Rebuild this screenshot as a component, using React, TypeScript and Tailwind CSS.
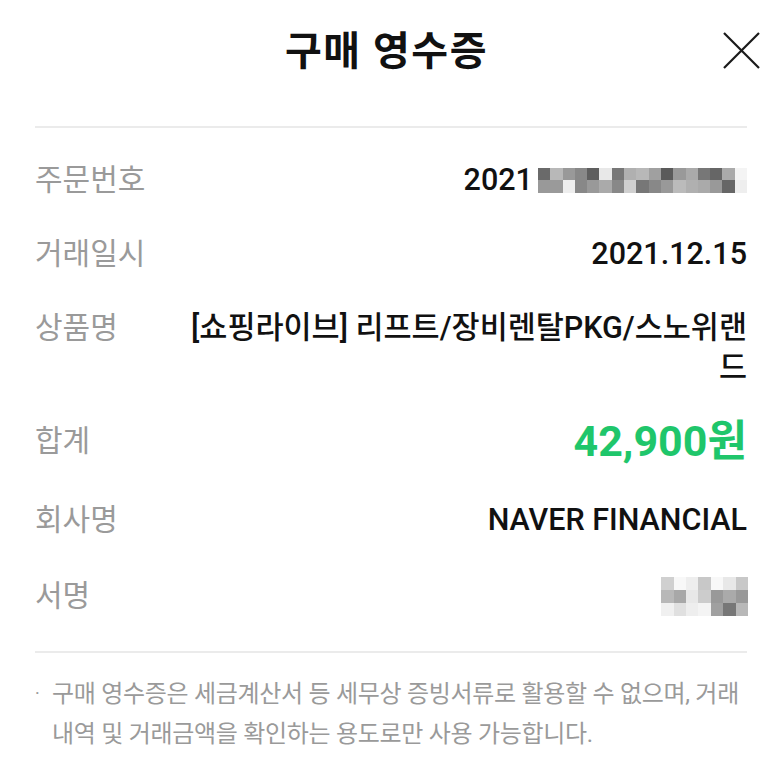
import React from "react";

const font = { fontFamily: "Roboto, 'Noto Sans CJK KR', sans-serif" };

const orderRow1 = ["#6a6a6a","#b8b8b8","#999999","#888888","#5e5e5e","#e8e8e8","#777777","#b0b0b0","#b8b8b8","#a0a0a0","#5a5a5a","#999999","#aaaaaa","#777777","#666666","#aaaaaa","#f4f4f4"];
const orderRow2 = ["#999999","#9a9a9a","#eeeeee","#888888","#999999","#aaaaaa","#888888","#d0d0d0","#777777","#888888","#999999","#bbbbbb","#b0b0b0","#aaaaaa","#999999","#666666","#eeeeee"];
const sig = [
  ["#d0d0d0","#f8f8f8","#eeeeee","#c8c8c8","#f8f8f8","#e8e8e8","#c8c8c8"],
  ["#b8b8b8","#a8a8a8","#e8e8e8","#cccccc","#999999","#aaaaaa","#999999"],
  ["#f0f0f0","#e0e0e0","#eeeeee","#f4f4f4","#a0a0a0","#777777","#b8b8b8"],
];

function Mosaic({ rows, w, h }: { rows: string[][]; w: number; h: number }) {
  return (
    <div className="flex flex-col">
      {rows.map((r, i) => (
        <div key={i} className="flex">
          {r.map((c, j) => (
            <div key={j} style={{ width: w, height: h, backgroundColor: c }} />
          ))}
        </div>
      ))}
    </div>
  );
}

function Row({ label, children, className = "" }: { label: string; children: React.ReactNode; className?: string }) {
  return (
    <div className={`flex justify-between items-start ${className}`}>
      <div className="text-[30px] leading-[40px] text-[#9a9a9a] whitespace-nowrap">{label}</div>
      <div className="text-right text-[30.5px] leading-[40px] font-medium text-[#111]">{children}</div>
    </div>
  );
}

export default function App() {
  return (
    <div className="w-[773px] h-[768px] bg-white overflow-hidden" style={font}>
      <div className="relative h-[126px] flex items-start justify-center">
        <h1 className="mt-[28px] text-[40px] leading-[48px] font-bold text-[#111] tracking-[1.5px]">구매 영수증</h1>
        <svg className="absolute left-[723px] top-[32px]" width="37" height="37" viewBox="0 0 37 37">
          <path d="M1 1 L36 36 M36 1 L1 36" stroke="#1a1a1a" strokeWidth="2.2" fill="none" />
        </svg>
      </div>
      <div className="ml-[35px] mr-[26px]">
        <div className="h-[2px] bg-[#ebebeb]" />
        <Row label="주문번호" className="mt-[32px]">
          <div className="flex items-center">
            <span>2021</span>
            <div className="ml-[5px]">
              <Mosaic rows={[orderRow1, orderRow2]} w={12.3} h={12.5} />
            </div>
          </div>
        </Row>
        <Row label="거래일시" className="mt-[34px]">2021.12.15</Row>
        <Row label="상품명" className="mt-[34px]">
          <div className="w-[560px]">[쇼핑라이브] 리프트/장비렌탈PKG/스노위랜드</div>
        </Row>
        <div className="flex justify-between items-center mt-[33px] h-[40px]">
          <div className="text-[30px] leading-[40px] text-[#9a9a9a]">합계</div>
          <div className="text-[43px] leading-[40px] font-bold text-[#1fc66b]">42,900원</div>
        </div>
        <Row label="회사명" className="mt-[39px]">NAVER FINANCIAL</Row>
        <div className="flex justify-between items-center mt-[36px] h-[40px]">
          <div className="text-[30px] leading-[40px] text-[#9a9a9a]">서명</div>
          <div className="mr-[-1px]">
            <Mosaic rows={sig} w={12.4} h={13} />
          </div>
        </div>
        <div className="h-[2px] bg-[#ebebeb] mt-[35px]" />
        <div className="mt-[21px] flex text-[24px] leading-[40px] text-[#9a9a9a]">
          <span className="w-[17px] shrink-0 text-[18px]">·</span>
          <p className="whitespace-nowrap tracking-[-0.3px]">구매 영수증은 세금계산서 등 세무상 증빙서류로 활용할 수 없으며, 거래<br />내역 및 거래금액을 확인하는 용도로만 사용 가능합니다.</p>
        </div>
      </div>
    </div>
  );
}
